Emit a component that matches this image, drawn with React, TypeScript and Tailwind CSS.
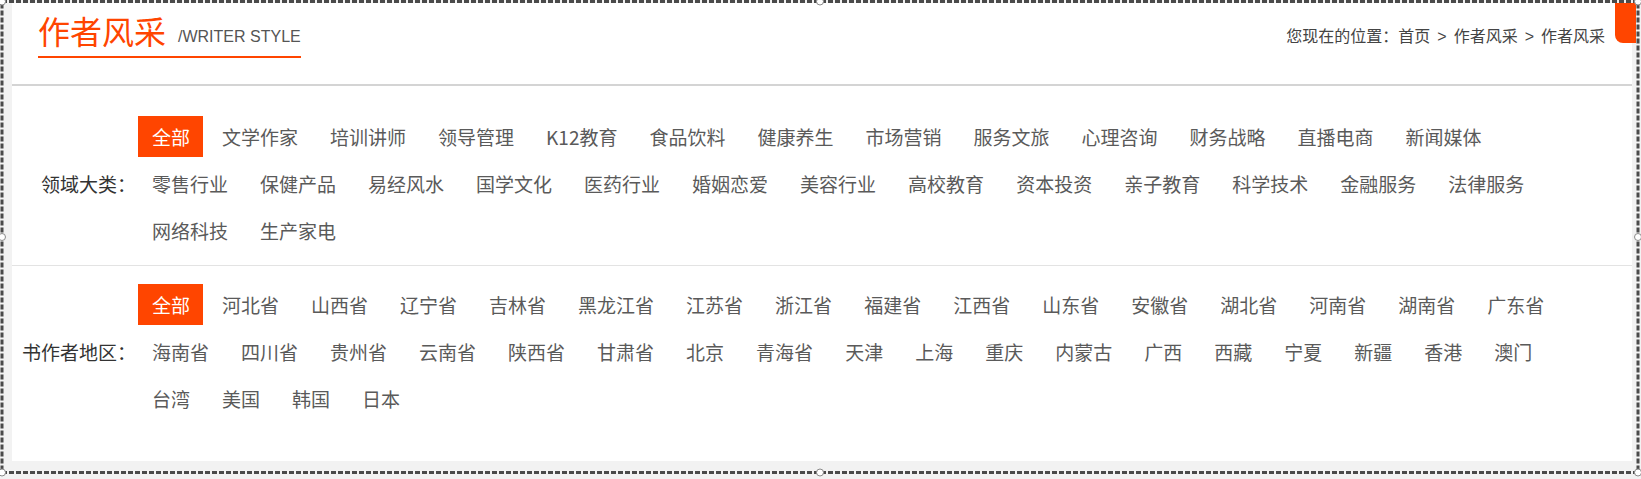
import React from 'react'

const fields = [
	'全部', '文学作家', '培训讲师', '领导管理', 'K12教育', '食品饮料', '健康养生', '市场营销', '服务文旅', '心理咨询', '财务战略', '直播电商', '新闻媒体',
	'零售行业', '保健产品', '易经风水', '国学文化', '医药行业', '婚姻恋爱', '美容行业', '高校教育', '资本投资', '亲子教育', '科学技术', '金融服务', '法律服务',
	'网络科技', '生产家电',
]

const regions = [
	'全部', '河北省', '山西省', '辽宁省', '吉林省', '黑龙江省', '江苏省', '浙江省', '福建省', '江西省', '山东省', '安徽省', '湖北省', '河南省', '湖南省', '广东省',
	'海南省', '四川省', '贵州省', '云南省', '陕西省', '甘肃省', '北京', '青海省', '天津', '上海', '重庆', '内蒙古', '广西', '西藏', '宁夏', '新疆', '香港', '澳门',
	'台湾', '美国', '韩国', '日本',
]

function FilterRow({ label, items }: { label: string; items: string[] }) {
	return (
		<div className="flex items-center pr-[52px]">
			<div className="w-[124px] shrink-0 text-right text-[19px] leading-[41px] text-[#333]">
				{label}
			</div>
			<ul className="ml-[2px] flex flex-1 flex-wrap gap-x-[5px] gap-y-[6px]">
				{items.map((item, i) => (
					<li
						key={item + i}
						className={
							i === 0
								? 'h-[41px] pl-[14px] pr-[13px] text-[19px] leading-[41px] bg-[#ff4500] text-white cursor-pointer'
								: 'h-[41px] pl-[14px] pr-[13px] text-[19px] leading-[41px] text-[#5a5a5a] cursor-pointer hover:text-[#ff4500]'
						}
					>
						{item}
					</li>
				))}
			</ul>
		</div>
	)
}

// editor selection frame drawn over the block
function SelectionFrame() {
	const handles = [
		[2, 1.5], [820, 1.5], [1638, 1.5], [1638, 237],
		[1638, 472.5], [820, 472.5], [2, 472.5], [2, 237],
	]
	return (
		<svg className="pointer-events-none absolute left-0 top-0" width="1641" height="479">
			<rect x="2" y="1.5" width="1636" height="471" fill="none" stroke="#4a4a4a" strokeWidth="3" strokeDasharray="5 2" />
			{handles.map(([cx, cy]) => (
				<circle key={`${cx}-${cy}`} cx={cx} cy={cy} r="3.5" fill="#fff" stroke="#8a8a8a" strokeWidth="1" />
			))}
		</svg>
	)
}

export default function App() {
	return (
		<div className="relative h-[479px] w-[1641px] overflow-hidden bg-[#f2f2f2] pl-[12px] pr-[9px] pt-[3px] font-['Noto_Sans_CJK_SC',sans-serif]">
			<div className="h-[458px] bg-white">
				<div className="flex h-[83px] items-start justify-between border-b-2 border-[#d4d4d4] pl-[26px] pr-[27px]">
					<div className="mt-[7px] border-b-2 border-[#ff4500] pb-[6px] text-[32px] leading-[40px]">
						<span className="text-[#ff4500]">作者风采</span>
						<span className="ml-[12px] align-[2px] font-['Liberation_Sans',Arial,sans-serif] text-[16px] leading-none text-[#555]">
							/WRITER STYLE
						</span>
					</div>
					<div className="mt-[20px] text-[16px] leading-[24px] text-[#444]">
						您现在的位置：<a href="#">首页</a>
						<span className="mx-[7px] font-['Liberation_Sans',Arial,sans-serif]">&gt;</span>
						<a href="#">作者风采</a>
						<span className="mx-[7px] font-['Liberation_Sans',Arial,sans-serif]">&gt;</span>
						<a href="#">作者风采</a>
					</div>
				</div>

				<div className="border-b border-[#e3e3e3] pb-[14px] pt-[30px]">
					<FilterRow label="领域大类：" items={fields} />
				</div>
				<div className="pt-[18px]">
					<FilterRow label="书作者地区：" items={regions} />
				</div>
			</div>

			<div className="absolute left-[1615px] top-[3px] h-[40px] w-[21px] rounded-bl-[8px] bg-[#ff4500]" />
			<SelectionFrame />
		</div>
	)
}
